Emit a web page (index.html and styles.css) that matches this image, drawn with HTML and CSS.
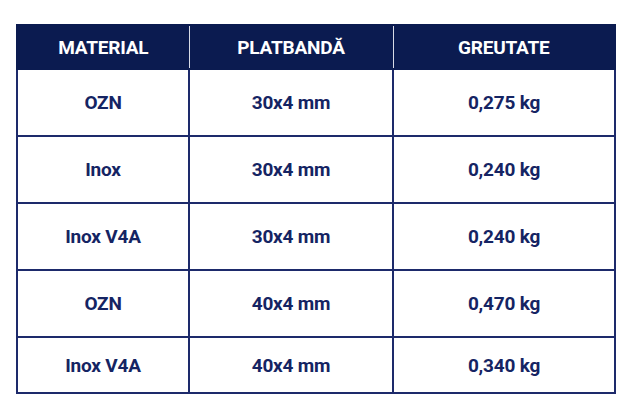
FILE: index.html
```html
<!DOCTYPE html>
<html lang="ro">
<head>
<meta charset="utf-8">
<link rel="stylesheet" href="styles.css">
</head>
<body>
<table class="spec">
  <colgroup><col class="c1"><col class="c2"><col class="c3"></colgroup>
  <thead>
    <tr><th>MATERIAL</th><th>PLATBANDĂ</th><th>GREUTATE</th></tr>
  </thead>
  <tbody>
    <tr><td>OZN</td><td>30x4 mm</td><td>0,275 kg</td></tr>
    <tr><td>Inox</td><td>30x4 mm</td><td>0,240 kg</td></tr>
    <tr><td>Inox V4A</td><td>30x4 mm</td><td>0,240 kg</td></tr>
    <tr><td>OZN</td><td>40x4 mm</td><td>0,470 kg</td></tr>
    <tr class="last"><td>Inox V4A</td><td>40x4 mm</td><td>0,340 kg</td></tr>
  </tbody>
</table>
</body>
</html>
```
FILE: styles.css
```css
html, body {
  margin: 0;
  background: #ffffff;
}
body {
  padding: 24px 16px 0 16px;
  font-family: Roboto, "Liberation Sans", sans-serif;
}
.spec {
  width: 598px;
  border-collapse: collapse;
  table-layout: fixed;
  color: #152463;
}
.c1 { width: 172px; }
.c2 { width: 204px; }
.c3 { width: 222px; }
.spec th {
  background: #0b1b50;
  color: #ffffff;
  height: 42px;
  padding: 0;
  font-size: 19px;
  font-weight: 700;
  letter-spacing: -0.2px;
  border: 2px solid #0b1b50;
  border-left: 1px solid #d8dbe6;
  border-right: 1px solid #d8dbe6;
}
.spec th:first-child { border-left: 2px solid #0b1b50; }
.spec th:last-child { border-right: 2px solid #0b1b50; }
.spec td {
  height: 65px;
  padding: 0;
  text-align: center;
  font-size: 19px;
  font-weight: 700;
  letter-spacing: -0.2px;
  border: 2px solid #1d2a6b;
}
.spec tr.last td { height: 54px; }
```
